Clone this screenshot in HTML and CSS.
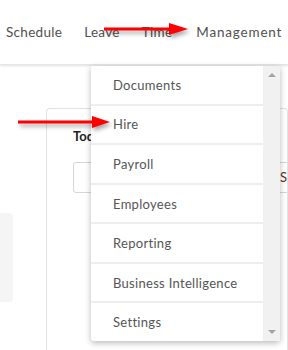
FILE: index.html
```html
<!doctype html>
<html lang="en">
 <head>
  <meta charset="UTF-8">
  <title>Management menu</title>
  <link rel="stylesheet" href="styles.css">
 </head>
 <body>

	<!-- top navigation -->
	<div class="topbar">
		<span class="nav">Schedule</span>
		<span class="nav">Leave</span>
		<span class="nav">Time</span>
		<span class="nav wide">Management</span>
	</div>

	<!-- page body -->
	<div class="main">
		<div class="side-box"></div>
		<div class="card">
			<div class="card-title">Today's Schedule</div>
			<div class="search-row">
				<div class="search-input"></div>
				<div class="search-btn">S</div>
			</div>
		</div>
	</div>

	<!-- management dropdown -->
	<div class="dropdown">
		<ul class="menu">
			<li>Documents</li>
			<li>Hire</li>
			<li>Payroll</li>
			<li>Employees</li>
			<li>Reporting</li>
			<li>Business Intelligence</li>
			<li>Settings</li>
		</ul>
		<div class="scrollbar">
			<span class="tri up"></span>
			<span class="tri down"></span>
		</div>
	</div>

	<!-- annotation arrows -->
	<svg class="arrows" width="288" height="350" viewBox="0 0 288 350">
		<g fill="#f00" stroke="none">
			<rect x="104" y="27.5" width="68" height="3"/>
			<polygon points="169,23 188,29 169,35"/>
			<rect x="18" y="120.5" width="76" height="3"/>
			<polygon points="92,116 110,122 92,128"/>
		</g>
	</svg>

 </body>
</html>
```

FILE: styles.css
```css
/* base */
html, body
{
	margin:0;
	padding:0;
}

body
{
	width:288px;
	height:350px;
	overflow:hidden;
	position:relative;
	background-color:#fff;
	font-family:Lato, "Noto Sans", sans-serif;
	color:#555;
}

/* top navigation */
.topbar
{
	height:64px;
	display:flex;
	align-items:center;
	gap:22px;
	padding-left:6px;
	box-shadow:0 1px 2px rgba(0,0,0,0.12);
	border-bottom:1px solid #e6e6e6;
	white-space:nowrap;
	font-size:13.5px;
	letter-spacing:0.3px;
}

.nav
{
	color:#505050;
}

.nav.wide
{
	letter-spacing:0.8px;
	margin-left:2px;
}

/* page body */
.main
{
	display:flex;
	align-items:flex-start;
	height:285px;
}

.side-box
{
	width:13px;
	height:89px;
	margin-top:148px;
	background-color:#f5f5f5;
	border-radius:0 4px 4px 0;
	flex:none;
}

.card
{
	flex:none;
	width:242px;
	height:284px;
	margin-top:43px;
	margin-left:33px;
	border:1px solid #e2e2e2;
	border-bottom:none;
	border-radius:4px 4px 0 0;
	padding:19px 0 0 26px;
	box-sizing:border-box;
}

.card-title
{
	font-weight:bold;
	font-size:13px;
	color:#222;
	white-space:nowrap;
	overflow:hidden;
}

.search-row
{
	display:flex;
	margin-top:18px;
	height:31px;
}

.search-input
{
	width:206px;
	flex:none;
	border:1px solid #d6d6d6;
	border-radius:3px 0 0 3px;
	box-sizing:border-box;
}

.search-btn
{
	flex:none;
	width:8px;
	overflow:hidden;
	border-top:1px solid #d6d6d6;
	border-bottom:1px solid #d6d6d6;
	box-sizing:border-box;
	padding:6px 0 0 1px;
	font-size:13px;
	color:#5a2e22;
}

/* dropdown */
.dropdown
{
	position:absolute;
	left:91px;
	top:66px;
	width:189px;
	height:275px;
	display:flex;
	background-color:#fff;
	box-shadow:0 2px 6px rgba(0,0,0,0.28);
	border-radius:0 0 3px 3px;
}

.menu
{
	list-style:none;
	margin:0;
	padding:0;
	flex:1;
	display:flex;
	flex-direction:column;
}

.menu li
{
	flex:1;
	display:flex;
	align-items:center;
	padding-left:22px;
	border-bottom:2px solid #eeeeee;
	font-size:13px;
	letter-spacing:0.3px;
	color:#555;
}

.menu li:last-child
{
	border-bottom:none;
}

.scrollbar
{
	width:17px;
	flex:none;
	background-color:#f1f1f1;
	display:flex;
	flex-direction:column;
	justify-content:space-between;
	align-items:center;
	padding:7px 0 7px;
	box-sizing:border-box;
}

.tri
{
	width:0;
	height:0;
	border-left:4px solid transparent;
	border-right:4px solid transparent;
}

.tri.up
{
	border-bottom:4px solid #a3a3a3;
}

.tri.down
{
	border-top:4px solid #a3a3a3;
}

/* annotation arrows */
.arrows
{
	position:absolute;
	left:0;
	top:0;
	filter:drop-shadow(2px 3px 2px rgba(0,0,0,0.35));
}
```
